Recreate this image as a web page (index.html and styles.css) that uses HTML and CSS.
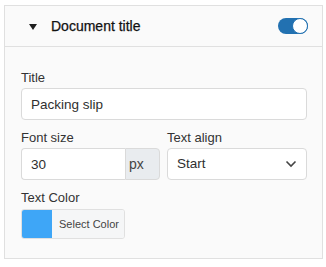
FILE: index.html
```html
<!DOCTYPE html>
<html lang="en">
  <head>
    <meta charset="UTF-8">
    <meta name="viewport" content="width=device-width, initial-scale=1">
    <title>Document title</title>
    <link rel="stylesheet" href="styles.css">
  </head>
  <body>

    <section class="panel">
      <header class="panel-head">
        <span class="caret"></span>
        <h1>Document title</h1>
        <span class="toggle"><span class="knob"></span></span>
      </header>

      <div class="panel-body">
        <label class="field">
          <span class="field-label">Title</span>
          <input class="text-input" type="text" value="Packing slip">
        </label>

        <div class="field-row">
          <label class="field">
            <span class="field-label">Font size</span>
            <span class="input-group">
              <input class="text-input" type="text" value="30">
              <span class="addon"><span class="addon-text">px</span></span>
            </span>
          </label>
          <label class="field">
            <span class="field-label">Text align</span>
            <span class="select">
              Start
              <svg width="12" height="8" viewBox="0 0 12 8"><path d="M1.5 1.5 6 6l4.5-4.5" fill="none" stroke="#444" stroke-width="1.6"/></svg>
            </span>
          </label>
        </div>

        <div class="field">
          <span class="field-label">Text Color</span>
          <span class="color-pick">
            <span class="swatch"></span>
            <span class="pick-btn">Select Color</span>
          </span>
        </div>
      </div>
    </section>

  </body>
</html>
```

FILE: styles.css
```css
:root {
  --clr-text:    #333;
  --clr-head:    #1e1e1e;
  --clr-border:  #e0e0e0;
  --clr-input:   #dadada;
  --clr-panel:   #fafafa;
  --clr-accent:  #2271b1;
  --clr-swatch:  #3ea6f7;
}

html, body {
  margin: 0;
  padding: 0;
  background: #fff;
  font: normal normal 13px/20px "Liberation Sans", Arial, sans-serif;
  color: var(--clr-text);
}

*, *::before, *::after {
  box-sizing: border-box;
}

body {
  padding: 5px 0 0 4px;
}

.panel {
  width: 319px;
  height: 254px;
  background: var(--clr-panel);
  border: solid 1px var(--clr-border);
}

.panel-head {
  display: flex;
  align-items: center;
  height: 41px;
  padding: 0 14px 0 24px;
  border-bottom: solid 1px var(--clr-border);
}

.caret {
  width: 0;
  height: 0;
  border-left: 4px solid transparent;
  border-right: 4px solid transparent;
  border-top: 6px solid var(--clr-head);
  margin-top: 1px;
}

.panel-head h1 {
  flex: 1;
  margin: 0 0 0 14px;
  font-size: 14px;
  font-weight: normal;
  color: #111;
  -webkit-text-stroke: 0.25px #111;
}

.toggle {
  position: relative;
  width: 30px;
  height: 16px;
  border-radius: 8px;
  background: var(--clr-accent);
}

.knob {
  position: absolute;
  right: 0;
  top: 0;
  width: 16px;
  height: 16px;
  border-radius: 50%;
  background: #fff;
  border: solid 1px var(--clr-accent);
}

.panel-body {
  display: flex;
  flex-direction: column;
  gap: 8px;
  padding: 21px 15px 0 16px;
}

.field {
  display: flex;
  flex-direction: column;
}

.field-label {
  display: block;
  height: 20px;
  line-height: 20px;
}

.text-input {
  width: 100%;
  height: 32px;
  margin: 0;
  padding: 0 9px;
  border: solid 1px var(--clr-input);
  border-radius: 4px;
  background: #fff;
  font: 13.5px "Liberation Sans", Arial, sans-serif;
  color: #2f2f2f;
  outline: none;
}

.field-row {
  display: grid;
  grid-template-columns: 139px 1fr;
  gap: 7px;
}

.input-group {
  display: flex;
}

.input-group .text-input {
  border-radius: 4px 0 0 4px;
  border-right: none;
}

.addon {
  flex: none;
  width: 35px;
  height: 32px;
  padding-left: 3px;
  line-height: 30px;
  font-size: 14px;
  color: #444;
  background: #e9ecef;
  border: solid 1px var(--clr-input);
  border-radius: 0 4px 4px 0;
}

.addon-text {
  display: inline-block;
  width: 15px;
  overflow: hidden;
  white-space: nowrap;
  vertical-align: top;
}

.select {
  display: flex;
  align-items: center;
  justify-content: space-between;
  height: 32px;
  padding: 0 9px 0 9px;
  border: solid 1px var(--clr-input);
  border-radius: 4px;
  background: #fff;
  font-size: 13.5px;
  color: #2f2f2f;
}

.color-pick {
  display: flex;
  width: 104px;
  height: 30px;
  margin-top: 1px;
  border: solid 1px var(--clr-border);
  border-radius: 3px;
  overflow: hidden;
}

.swatch {
  width: 30px;
  background: var(--clr-swatch);
}

.pick-btn {
  flex: 1;
  padding-left: 7px;
  line-height: 28px;
  font-size: 11px;
  color: #444;
  background: #f5f6f7;
}
```
